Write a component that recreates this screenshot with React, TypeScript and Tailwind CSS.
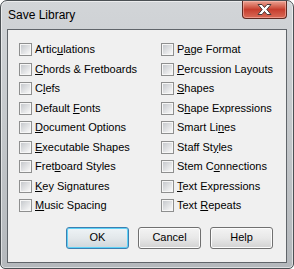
import React from "react";

type Item = { pre: string; key: string; post: string };

const left: Item[] = [
  { pre: "Artic", key: "u", post: "lations" },
  { pre: "", key: "C", post: "hords & Fretboards" },
  { pre: "C", key: "l", post: "efs" },
  { pre: "Default ", key: "F", post: "onts" },
  { pre: "", key: "D", post: "ocument Options" },
  { pre: "", key: "E", post: "xecutable Shapes" },
  { pre: "Fret", key: "b", post: "oard Styles" },
  { pre: "", key: "K", post: "ey Signatures" },
  { pre: "", key: "M", post: "usic Spacing" },
];

const right: Item[] = [
  { pre: "P", key: "a", post: "ge Format" },
  { pre: "", key: "P", post: "ercussion Layouts" },
  { pre: "", key: "S", post: "hapes" },
  { pre: "S", key: "h", post: "ape Expressions" },
  { pre: "Smart Li", key: "n", post: "es" },
  { pre: "Staff St", key: "y", post: "les" },
  { pre: "Stem C", key: "o", post: "nnections" },
  { pre: "", key: "T", post: "ext Expressions" },
  { pre: "Text ", key: "R", post: "epeats" },
];

const CheckRow = ({ item }: { item: Item }) => (
  <div className="flex h-[19.5px] items-center">
    <div className="h-[13px] w-[13px] shrink-0 border border-[#8e8f8f] bg-[#f6f6f6] p-[1px]">
      <div className="h-full w-full bg-linear-to-br from-[#c6c9cd] to-[#f8f8f8]" />
    </div>
    <span className="ml-[3px] whitespace-nowrap text-[11px] leading-none text-black">
      {item.pre}
      <span className="underline">{item.key}</span>
      {item.post}
    </span>
  </div>
);

const Button = ({
  label,
  primary,
}: {
  label: string;
  primary?: boolean;
}) => (
  <div
    className={
      "flex h-[22px] w-[63px] items-center justify-center rounded-[3px] border text-[11px] text-black " +
      (primary
        ? "border-[#3c7fb1] bg-linear-to-b from-[#eef3f6] via-[#e3e8eb] to-[#cfd6db] shadow-[inset_0_0_0_1px_#5fd2f7]"
        : "border-[#707070] bg-linear-to-b from-[#f3f3f3] via-[#e8e8e8] to-[#d2d2d2] shadow-[inset_0_0_0_1px_#fcfcfc]")
    }
  >
    {label}
  </div>
);

export default function App() {
  return (
    <div
      className="h-[269px] w-[294px] bg-white"
      style={{ fontFamily: '"Liberation Sans", Arial, sans-serif' }}
    >
      <div className="flex h-[269px] w-[294px] flex-col rounded-t-[7px] rounded-b-[5px] border border-[#4b5054] bg-linear-to-b from-[#d2d5d8] via-[#c3c7ca] to-[#b4b8bc] shadow-[inset_0_0_0_1px_rgba(255,255,255,0.55)]">
        <div className="flex h-[28px] items-start justify-between">
          <span className="ml-[7px] mt-[8px] text-[12px] leading-none text-black">
            Save Library
          </span>
          <div className="mr-[6px] flex h-[18px] w-[45px] items-center justify-center rounded-b-[4px] border border-t-0 border-[#5e2a22] bg-linear-to-b from-[#eba293] via-[#c63d2d] to-[#d96a57] shadow-[inset_0_0_0_1px_rgba(255,200,190,0.5)]">
            <svg width="17" height="13" viewBox="0 0 17 13">
              <path
                d="M2 1.5 L6 1.5 L8.5 4.5 L11 1.5 L15 1.5 L10.8 6.5 L15 11.5 L11 11.5 L8.5 8.5 L6 11.5 L2 11.5 L6.2 6.5 Z"
                fill="#ffffff"
                stroke="#4a3a38"
                strokeWidth="1"
                strokeLinejoin="round"
              />
            </svg>
          </div>
        </div>
        <div className="mx-[6px] flex h-[234px] flex-col border border-[#60656a] bg-[#f0f0f0]">
          <div className="ml-[11px] mt-[10px] grid grid-cols-[142px_1fr]">
            <div className="flex flex-col">
              {left.map((it) => (
                <CheckRow key={it.pre + it.key + it.post} item={it} />
              ))}
            </div>
            <div className="flex flex-col">
              {right.map((it) => (
                <CheckRow key={it.pre + it.key + it.post} item={it} />
              ))}
            </div>
          </div>
          <div className="ml-[58px] mt-[11px] flex gap-[9px]">
            <Button label="OK" primary />
            <Button label="Cancel" />
            <Button label="Help" />
          </div>
        </div>
      </div>
    </div>
  );
}
